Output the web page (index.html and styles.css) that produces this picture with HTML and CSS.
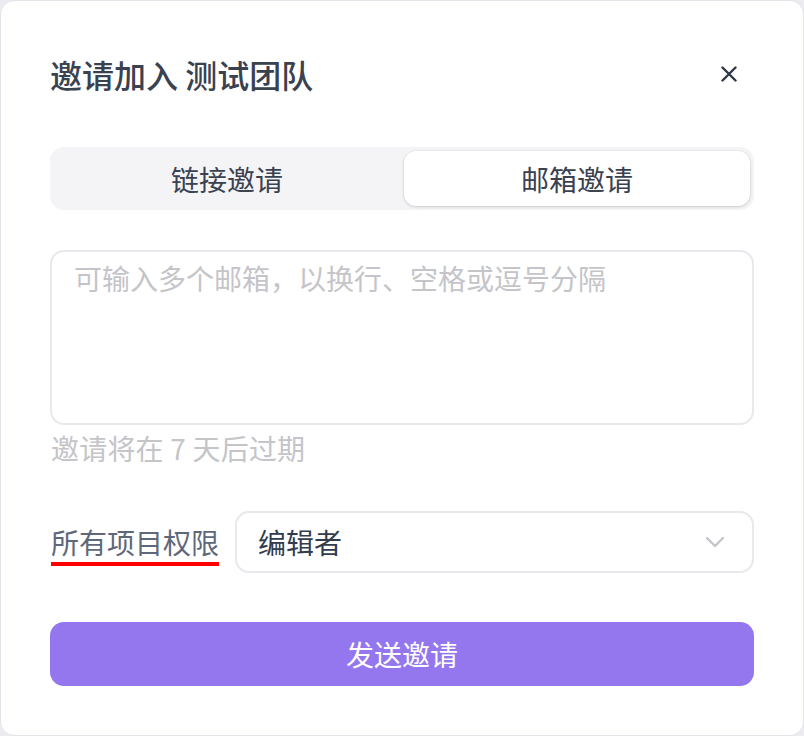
FILE: index.html
```html
<!DOCTYPE html>
<html lang="zh-CN">
<head>
<meta charset="utf-8">
<title>邀请加入 测试团队</title>
<link rel="stylesheet" href="styles.css">
</head>
<body>
<div class="card">
  <div class="header">
    <h1 class="title">邀请加入 测试团队</h1>
    <button class="close" aria-label="关闭">
      <svg width="16" height="16" viewBox="0 0 16 16"><path d="M1.5 1.5 L14.5 14.5 M14.5 1.5 L1.5 14.5" stroke="#2f3747" stroke-width="2.4" stroke-linecap="round" fill="none"/></svg>
    </button>
  </div>
  <div class="tabs">
    <div class="tab">链接邀请</div>
    <div class="tab active">邮箱邀请</div>
  </div>
  <textarea class="emails" placeholder="可输入多个邮箱，以换行、空格或逗号分隔"></textarea>
  <div class="hint">邀请将在 7 天后过期</div>
  <div class="perm-row">
    <span class="perm-label">所有项目权限</span>
    <div class="select">
      <span class="select-value">编辑者</span>
      <svg class="chevron" width="20" height="12" viewBox="0 0 20 12"><path d="M2 2 L10 10 L18 2" stroke="#c4c4cb" stroke-width="2.4" stroke-linecap="round" stroke-linejoin="round" fill="none"/></svg>
    </div>
  </div>
  <button class="send">发送邀请</button>
</div>
</body>
</html>
```
FILE: styles.css
```css
* { box-sizing: border-box; }
html, body { margin: 0; padding: 0; }
body {
  background: #ececf0;
  font-family: "Noto Sans CJK SC", "Noto Sans", sans-serif;
  width: 804px;
  height: 736px;
  overflow: hidden;
}
.card {
  width: 804px;
  height: 736px;
  background: #fff;
  border: 1px solid #e3e3e9;
  border-radius: 14px;
  padding: 0 49px;
  display: flex;
  flex-direction: column;
}
.header {
  margin-top: 47px;
  height: 52px;
  display: flex;
  align-items: center;
  justify-content: space-between;
}
.title {
  margin: 0;
  font-size: 32px;
  font-weight: 500;
  color: #3a414f;
  line-height: 52px;
}
.close {
  border: 0;
  background: none;
  padding: 0;
  width: 16px;
  height: 16px;
  margin-right: 17px;
  display: flex;
}
.tabs {
  margin-top: 47px;
  height: 63px;
  background: #f4f4f6;
  border-radius: 14px;
  padding: 4px;
  display: grid;
  grid-template-columns: 1fr 1fr;
  gap: 4px;
}
.tab {
  display: flex;
  align-items: center;
  justify-content: center;
  font-size: 28px;
  color: #3a4150;
  border-radius: 12px;
}
.tab.active {
  background: #fff;
  box-shadow: 0 1px 3px rgba(0,0,0,0.14), 0 0 0 1px rgba(0,0,0,0.03);
}
.emails {
  margin-top: 40px;
  height: 175px;
  width: 100%;
  border: 2px solid #e8e8ed;
  border-radius: 14px;
  padding: 8px 22px;
  font-family: "Noto Sans CJK SC", "Noto Sans", sans-serif;
  font-size: 28px;
  line-height: 36px;
  resize: none;
  outline: none;
  color: #333;
}
.emails::placeholder { color: #c4c4c9; }
.hint {
  margin-top: 5px;
  font-size: 28px;
  line-height: 36px;
  color: #c4c4c9;
  padding-left: 1px;
  letter-spacing: 0.2px;
}
.perm-row {
  margin-top: 45px;
  display: flex;
  align-items: center;
  gap: 16px;
}
.perm-label {
  font-size: 28px;
  color: #5f687a;
  line-height: 36px;
  padding-left: 1px;
  text-decoration: underline;
  text-decoration-color: #ff0000;
  text-decoration-thickness: 4px;
  text-underline-offset: 8px;
}
.select {
  flex: 1;
  height: 62px;
  border: 2px solid #e8e8ed;
  border-radius: 14px;
  display: flex;
  align-items: center;
  justify-content: space-between;
  padding: 0 27px 0 21px;
}
.select-value {
  font-size: 28px;
  color: #333c4c;
}
.send {
  margin-top: 49px;
  height: 64px;
  width: 100%;
  border: 0;
  border-radius: 14px;
  background: #9476ee;
  color: #fff;
  font-family: "Noto Sans CJK SC", "Noto Sans", sans-serif;
  font-size: 28px;
}
```
